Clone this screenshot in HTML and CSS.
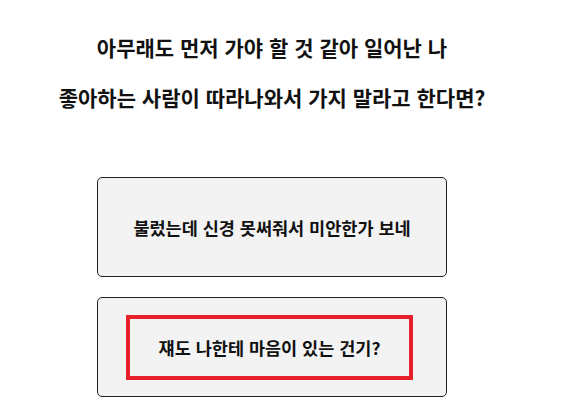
FILE: index.html
```html
<!DOCTYPE html>
<html lang="ko">

<head>
    <meta charset="UTF-8">
    <meta name="viewport" content="width=device-width, initial-scale=1.0">
    <title>선택</title>
    <link rel="stylesheet" href="styles.css">
</head>

<body>
    <div class="page">
        <!-- 상황 설명 -->
        <div class="question">
            <p>아무래도 먼저 가야 할 것 같아 일어난 나</p>
            <p>좋아하는 사람이 따라나와서 가지 말라고 한다면?</p>
        </div>

        <!-- 선택지 -->
        <div class="choices">
            <div class="choice">
                <span class="choice-text">불렀는데 신경 못써줘서 미안한가 보네</span>
            </div>
            <div class="choice">
                <span class="choice-text selected">쟤도 나한테 마음이 있는 건기?</span>
            </div>
        </div>
    </div>
</body>

</html>
```

FILE: styles.css
```css
* {
    margin: 0;
    padding: 0;
    box-sizing: border-box;
}

body {
    background: #fff;
    font-family: "Noto Sans CJK KR", "Noto Sans", sans-serif;
    color: #111;
}

.page {
    width: 544px;
    padding-top: 22px;
    display: flex;
    flex-direction: column;
    align-items: center;
}

/* 질문 두 줄 */
.question {
    text-align: center;
    font-size: 21px;
    font-weight: bold;
    line-height: 50px;
}

.choices {
    margin-top: 55px;
    display: flex;
    flex-direction: column;
    gap: 20px;
}

.choice {
    width: 350px;
    height: 100px;
    background-color: #f3f3f3;
    border: 1px solid #222;
    border-radius: 5px;
    display: flex;
    align-items: center;
    justify-content: center;
}

.choice-text {
    font-size: 17.5px;
    font-weight: bold;
}

/* 선택된 답 */
.selected {
    width: 287px;
    height: 65px;
    margin-right: 5px;
    border: 4px solid #e8202a;
    display: flex;
    align-items: center;
    justify-content: center;
}
```
